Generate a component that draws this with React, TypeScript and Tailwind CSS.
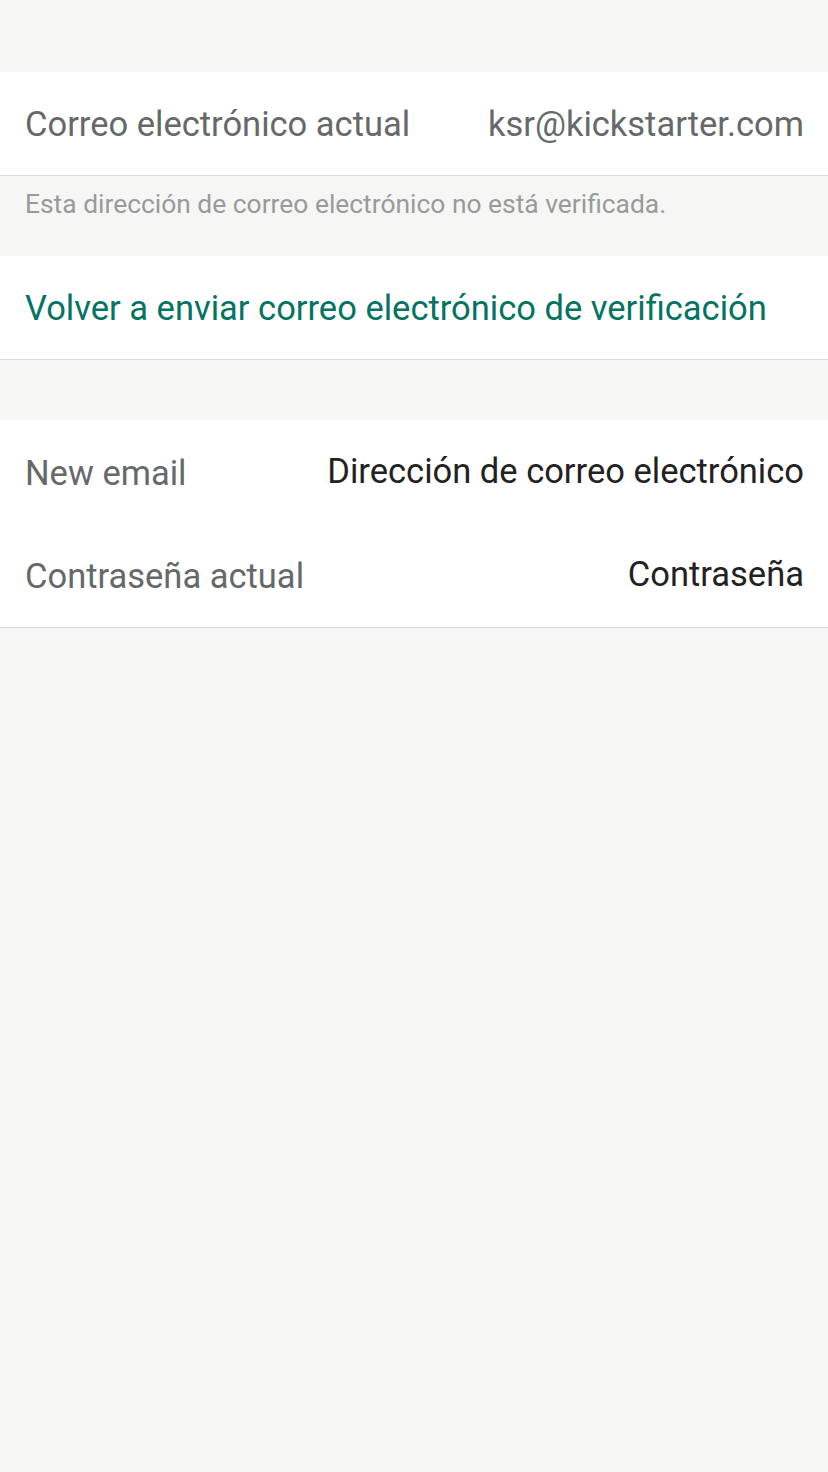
import React from 'react';

const font = { fontFamily: 'Roboto, "Liberation Sans", sans-serif' };

function Row({ label, value, dark }: { label: string; value: string; dark?: boolean }) {
  return (
    <div className="flex h-[103px] items-center justify-between pl-[25px] pr-[24px] pt-[2px]">
      <span className="text-[34.5px] text-[#656969]">{label}</span>
      <span className={dark ? 'text-[34.5px] text-[#222222] -mt-[4px]' : 'text-[34.5px] text-[#656969]'}>{value}</span>
    </div>
  );
}

export default function App() {
  return (
    <div className="min-h-[1472px] w-full bg-[#f6f6f5]" style={font}>
      <div className="h-[72px]" />

      {/* Current email */}
      <div className="bg-white border-b border-[#dcdcdc]">
        <Row label="Correo electrónico actual" value="ksr@kickstarter.com" />
      </div>
      <div className="h-[80px] px-[25px] pt-[9px] text-[26.4px] text-[#9a9a9a]">
        Esta dirección de correo electrónico no está verificada.
      </div>

      {/* Resend */}
      <div className="flex h-[104px] items-center bg-white border-b border-[#dcdcdc] px-[25px] pt-[2px]">
        <span className="text-[34.5px] text-[#037362]">Volver a enviar correo electrónico de verificación</span>
      </div>

      <div className="h-[60px]" />

      {/* New email form */}
      <div className="bg-white border-b border-[#dcdcdc]">
        <div className="h-[1px]" />
        <Row label="New email" value="Dirección de correo electrónico" dark />
        <Row label="Contraseña actual" value="Contraseña" dark />
      </div>
    </div>
  );
}
